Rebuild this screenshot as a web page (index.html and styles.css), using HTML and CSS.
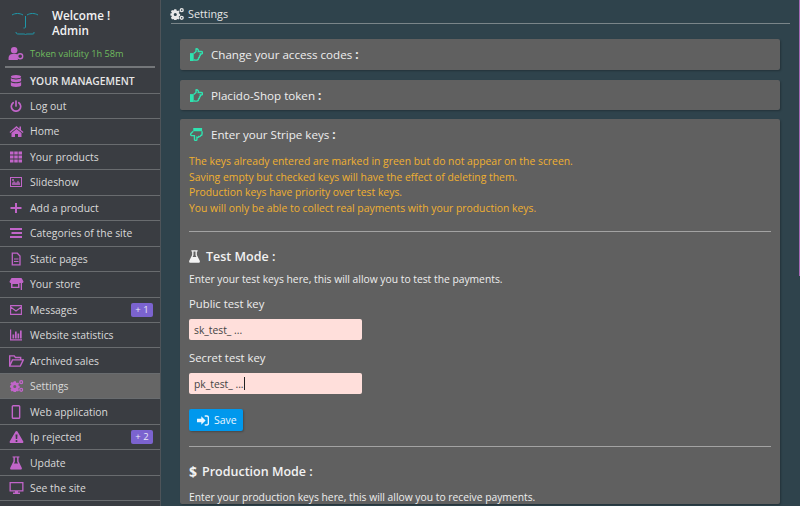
FILE: index.html
```html
<!DOCTYPE html>
<html lang="en">
<head>
<meta charset="utf-8">
<title>Settings</title>
<link rel="stylesheet" href="styles.css">
</head>
<body>
<svg class="sprites" width="0" height="0" aria-hidden="true">
  <symbol id="gears" viewBox="0 0 16 14"><path fill="currentColor" fill-rule="evenodd" d="M4.800 1.500h2.400l.3 1.400 1 .5 1.300-.6 1.300 1.700-1 1 .2 1 1.400.5v2.200l-1.400.4-.2 1.100 1 1-1.300 1.700-1.300-.6-1 .5-.3 1.400H4.800l-.3-1.400-1-.5-1.300.6L.9 11.200l1-1-.2-1.100L.3 8.700V6.500l1.400-.5.200-1-1-1 1.300-1.700 1.300.6 1-.5zM6 5.800a1.800 1.800 0 1 0 0 3.600 1.800 1.800 0 0 0 0-3.600z"/><path fill="currentColor" fill-rule="evenodd" d="M13.500 0a2.500 2.500 0 1 1 0 5 2.500 2.500 0 0 1 0-5zm0 1.600a.9.9 0 1 0 0 1.800.9.9 0 0 0 0-1.800zM13.500 9a2.500 2.500 0 1 1 0 5 2.500 2.500 0 0 1 0-5zm0 1.600a.9.9 0 1 0 0 1.800.9.9 0 0 0 0-1.800z"/></symbol>
  <symbol id="hand-right" viewBox="0 0 14 14"><path fill="currentColor" d="M0 5.500h4V14H0z"/><path fill="none" stroke="currentColor" stroke-width="1.500" d="M4 6 6.500 3.800V1c1.700-.6 2.900 1 2.400 2.800h3.400c1.500 0 1.500 2.700 0 2.700h-1.200c.3 1-.1 1.900-.8 2.100.1 1-.3 1.800-1 2 0 1-.7 2.400-2 2.400H5L4 12.500"/></symbol>
  <symbol id="hand-down" viewBox="0 0 14 14"><path fill="currentColor" d="M3.500 0H13v3.500H3.500z"/><path fill="none" stroke="currentColor" stroke-width="1.500" d="M3.500 3.500 1 6c-1 1.300.3 2.500 2 2.200h1.800v3.800c0 1.800 2.700 1.800 2.700 0V10c1 .3 1.800 0 2-.8 1 .2 2-.3 2.100-1.100 1 0 1.400-1 1.400-2V3.500"/></symbol>
  <symbol id="flask" viewBox="0 0 14 16"><path fill="currentColor" fill-rule="evenodd" d="M3 0h8v1.700h-1V6l3.700 7.500c.5 1.200-.2 2.500-1.500 2.500H1.800C.5 16-.2 14.700.3 13.500L4 6V1.700H3zM5.700 1.700v4.800L4.600 8.700h4.800L8.300 6.500V1.700z"/></symbol>
</svg>
<div class="app">
  <aside class="sidebar">
    <div class="welcome">
      <svg class="face" viewBox="0 0 30 30" width="30" height="30"><path fill="none" stroke="#1f97a8" stroke-width="1" d="M1 7c3-2 8-2 11 0M16 7c3-2 8-2 11 0M14.500 8v11c0 1-.5 1-2 1M5 24c0 2 1 2 3 2h4c1.500 0 2 0 2.500 1 .5-1 1-1 2.500-1h4c2 0 2 0 2-2"/></svg>
      <div class="welcome-text">Welcome !<br>Admin</div>
    </div>
    <div class="token">
      <svg class="token-icon" viewBox="0 0 16 14" width="16" height="13"><circle cx="6" cy="3.500" r="3.500" fill="currentColor"/><path fill="currentColor" d="M0 14v-2.500C0 9 2 7.500 4 7.500h4c1 0 1.500.3 2 .7v5.800z"/><circle cx="12.500" cy="10" r="2.700" fill="none" stroke="currentColor" stroke-width="1.500"/></svg>
      <span>Token validity 1h 58m</span>
    </div>
    <hr class="side-rule">
    <nav class="menu">
      <a class="item strong"><svg class="ic" viewBox="0 0 12 14"><path fill="currentColor" d="M6 0c3.300 0 6 .9 6 2s-2.700 2-6 2-6-.9-6-2 2.700-2 6-2zM0 3.600C1.200 4.800 3.500 5.200 6 5.200s4.800-.4 6-1.600v2.900c0 1.100-2.700 2-6 2s-6-.9-6-2zM0 8.100c1.200 1.200 3.500 1.600 6 1.600s4.800-.4 6-1.600V12c0 1.100-2.700 2-6 2s-6-.9-6-2z"/></svg><span>YOUR MANAGEMENT</span></a>
      <a class="item"><svg class="ic" viewBox="0 0 12 12"><path fill="none" stroke="currentColor" stroke-width="1.700" stroke-linecap="round" d="M6 1v5M3.200 2.700a4.700 4.700 0 1 0 5.600 0"/></svg><span>Log out</span></a>
      <a class="item"><svg class="ic wide" viewBox="0 0 14 12"><path fill="currentColor" d="M7 1 0 7l.8 1L7 3l6.200 5 .8-1-2.500-2.100V1.500H10v2.200zM7 4 2 8v4h3.500V9h3v3H12V8z"/></svg><span>Home</span></a>
      <a class="item"><svg class="ic" viewBox="0 0 12 11"><path fill="currentColor" d="M0 0h3.500v3H0zM4.250 0h3.500v3h-3.500zM8.500 0H12v3H8.500zM0 4h3.500v3H0zM4.250 4h3.500v3h-3.500zM8.500 4H12v3H8.500zM0 8h3.500v3H0zM4.250 8h3.500v3h-3.500zM8.500 8H12v3H8.500z"/></svg><span>Your products</span></a>
      <a class="item"><svg class="ic" viewBox="0 0 12 10"><path fill="currentColor" fill-rule="evenodd" d="M0 0h12v10H0zM1 1v8h10V1z"/><path fill="currentColor" opacity=".75" d="M2 8V6l2-2 2 2 2-2.500L10 6v2z"/><circle cx="3" cy="3" r="1" fill="currentColor"/></svg><span>Slideshow</span></a>
      <a class="item"><svg class="ic" viewBox="0 0 12 12"><path fill="currentColor" d="M5 1h2v4h4.500v2H7v4H5V7H.5V5H5z"/></svg><span>Add a product</span></a>
      <a class="item"><svg class="ic" viewBox="0 0 12 10"><path fill="currentColor" d="M0 0h12v2H0zM1.500 4H12v2H1.500zM0 8h12v2H0z"/></svg><span>Categories of the site</span></a>
      <a class="item"><svg class="ic tall" viewBox="0 0 12 13"><path fill="none" stroke="currentColor" stroke-width="1.300" d="M2.300.7h5l2.700 2.800v8.800H2.300z"/><path stroke="currentColor" d="M4 6.500h4.500M4 9h4.500"/></svg><span>Static pages</span></a>
      <a class="item"><svg class="ic wide" viewBox="0 0 14 12"><path fill="currentColor" fill-rule="evenodd" d="M2 0h10l2 3.500C14 4.500 13 5 12.500 5v7h-1.300V5H10v5H1.500V5C1 5 0 4.500 0 3.500zM3 6v2.800h5.500V6z"/></svg><span>Your store</span></a>
      <a class="item"><svg class="ic" viewBox="0 0 12 10"><path fill="none" stroke="currentColor" stroke-width="1.100" d="M.6.600h10.800v8.800H.6zM.6 2l5.400 4 5.400-4"/></svg><span>Messages</span><b class="badge">+ 1</b></a>
      <a class="item"><svg class="ic" viewBox="0 0 12 11"><path fill="currentColor" d="M0 0h1.200v9.800H12V11H0zM2.500 5h1.700v4H2.500zM5 2h1.700v7H5zM7.500 4h1.700v5H7.500zM10 1h1.700v8H10z"/></svg><span>Website statistics</span></a>
      <a class="item"><svg class="ic wide" viewBox="0 0 13 10"><path fill="none" stroke="currentColor" stroke-width="1.200" d="M.6 9.400V.6h4l1 1.400h4.500v1.500M.6 9.400h9.200l2.600-5.400H3z"/></svg><span>Archived sales</span></a>
      <a class="item active"><svg class="ic wide" viewBox="0 0 16 14"><use href="#gears"/></svg><span>Settings</span></a>
      <a class="item"><svg class="ic tall" viewBox="0 0 8 13"><path fill="none" stroke="currentColor" stroke-width="1.300" d="M1.400.7h5.200a.8.8 0 0 1 .8.800v10a.8.8 0 0 1-.8.800H1.400a.8.8 0 0 1-.8-.8v-10a.8.8 0 0 1 .8-.8z"/></svg><span>Web application</span></a>
      <a class="item"><svg class="ic wide" viewBox="0 0 14 12"><path fill="currentColor" fill-rule="evenodd" d="M7 0c.5 0 .8.300 1 .6l5.800 9.800c.4.800-.1 1.600-1 1.600H1.200c-.9 0-1.400-.8-1-1.600L6 .6C6.200.3 6.500 0 7 0zM6 3.500l.3 4.500h1.400L8 3.500zM7 9a1 1 0 1 0 0 2 1 1 0 0 0 0-2z"/></svg><span>Ip rejected</span><b class="badge">+ 2</b></a>
      <a class="item"><svg class="ic tall" viewBox="0 0 14 16"><use href="#flask"/></svg><span>Update</span></a>
      <a class="item"><svg class="ic wide" viewBox="0 0 14 12"><path fill="currentColor" fill-rule="evenodd" d="M0 0h14v9.500H8.500v1h2V12h-7v-1.500h2v-1H0zM1.300 1.300v6.900h11.400V1.300z"/></svg><span>See the site</span></a>
    </nav>
  </aside>
  <main class="main">
    <header class="crumb"><svg class="crumb-icon"><use href="#gears"/></svg><span>Settings</span></header>
    <section class="card closed"><h2 class="card-title"><svg class="hand"><use href="#hand-right"/></svg>Change your access codes <b class="colon">:</b></h2></section>
    <section class="card closed"><h2 class="card-title"><svg class="hand"><use href="#hand-right"/></svg>Placido-Shop token <b class="colon">:</b></h2></section>
    <section class="card">
      <h2 class="card-title"><svg class="hand"><use href="#hand-down"/></svg>Enter your Stripe keys <b class="colon">:</b></h2>
      <p class="notice">The keys already entered are marked in green but do not appear on the screen.<br>Saving empty but checked keys will have the effect of deleting them.<br>Production keys have priority over test keys.<br>You will only be able to collect real payments with your production keys.</p>
      <hr class="rule">
      <h3 class="mode"><svg class="mode-icon"><use href="#flask"/></svg>Test Mode :</h3>
      <p class="hint">Enter your test keys here, this will allow you to test the payments.</p>
      <label class="label">Public test key</label>
      <div class="field">sk_test_ ...</div>
      <label class="label">Secret test key</label>
      <div class="field">pk_test_ ...<i class="caret"></i></div>
      <button class="save"><svg viewBox="0 0 14 12" width="12" height="11"><path fill="currentColor" d="M0 4h5V1l5 5-5 5V8H0zM9 0h2.500C13 0 14 1 14 2.500v7c0 1.500-1 2.500-2.500 2.500H9v-1.500h2.500c.6 0 1-.4 1-1v-7c0-.6-.4-1-1-1H9z"/></svg>Save</button>
      <hr class="rule second">
      <h3 class="mode prod"><span class="dollar">$</span>Production Mode :</h3>
      <p class="hint">Enter your production keys here, this will allow you to receive payments.</p>
    </section>
  </main>
  <div class="scroll-edge"></div>
</div>
</body>
</html>
```
FILE: styles.css
```css
* { box-sizing: border-box; }
html, body { margin: 0; height: 100%; overflow: hidden; }
body { font-family: "Open Sans", sans-serif; font-size: 11px; color: #e8e8e8; background: #2f434c; }
.sprites { position: absolute; }
.app { display: flex; height: 506px; overflow: hidden; }

.sidebar { width: 161px; flex: none; background: #3a3d42; border-right: 1px solid #4e5459; }
.welcome { display: flex; align-items: center; gap: 11px; height: 45px; padding: 1px 0 0 11px; }
.face { flex: none; }
.welcome-text { font-size: 11.700px; line-height: 15px; font-weight: 600; color: #f2f2f2; }
.token { display: flex; align-items: center; height: 16px; margin-bottom: 5px; padding-left: 8px; font-size: 9.200px; color: #6fbb5e; }
.token-icon { color: #c165c9; margin-right: 6px; flex: none; }
.side-rule { margin: 0 5px; height: 2px; border: 0; background: #74777a; }
.menu { display: flex; flex-direction: column; padding-top: 0.300px; }
.item { display: flex; align-items: center; height: 25.470px; padding: 0 7px 0 0; border-bottom: 1px solid #696c6f; color: #d9d9d9; font-size: 10.400px; }
.item.strong { font-weight: 600; color: #e6e6e6; font-size: 10.300px; }
.item.active { background: #666; }
.ic { width: 12px; height: 12px; margin: 0 8px 0 10px; flex: none; color: #c165c9; }
.ic.wide { width: 15px; margin: 0 6px 0 9px; }
.ic.tall { height: 14px; }
.badge { margin-left: auto; width: 22px; height: 14px; border-radius: 2px; background: #7b63cf; color: #e8e8f5; font-size: 9.500px; font-weight: 400; line-height: 14px; text-align: center; }

.main { flex: 1; padding: 0 20px 0 10px; min-width: 0; overflow: hidden; }
.crumb { display: flex; align-items: center; gap: 4px; height: 24px; padding-top: 4px; margin-right: -10px; border-bottom: 1px solid #7a8589; font-size: 10.800px; color: #e8e8e8; }
.crumb-icon { width: 14px; height: 12px; color: #e8e8e8; margin-left: -1px; }
.card { margin: 15px 0 0 9px; border-radius: 2px; background: #606060; box-shadow: 1px 1px 2px rgba(0,0,0,.25); padding: 0 9px; }
.card.closed { height: 31px; }
.card.closed + .card.closed { height: 30px; margin-top: 10px; }
.card.closed + .card:not(.closed) { margin-top: 9px; }
.card-title { display: flex; align-items: center; margin: 0; height: 31px; font-size: 11.600px; font-weight: 400; color: #eee; white-space: pre; }
.colon { font-weight: 700; }
.hand { width: 13px; height: 13px; margin: 0 8px 0 1px; color: #2fe3b0; flex: none; }
.notice { margin: 4px 0 0; font-size: 10.380px; line-height: 15.500px; color: #f0b030; }
.rule { margin: 15px 0 0; border: 0; height: 1px; background: #a3a3a3; }
.mode { display: flex; align-items: center; margin: 16px 0 0; font-size: 12.500px; line-height: 17px; font-weight: 600; color: #f2f2f2; }
.mode-icon { width: 11px; height: 13px; margin-right: 6px; }
.dollar { font-size: 14px; margin-right: 5px; font-weight: 700; }
.hint { margin: 7px 0 0; font-size: 10.300px; line-height: 14px; color: #eee; }
.prod + .hint { margin-top: 10px; }
.label { display: block; margin-top: 10px; font-size: 11.300px; line-height: 15px; color: #eee; }
.field { display: flex; align-items: center; width: 173px; height: 21px; margin-top: 8px; padding-left: 5px; border-radius: 2px; background: #ffdfdb; color: #444; font-size: 10.300px; }
.caret { width: 1px; height: 13px; background: #222; }
.save { display: flex; align-items: center; gap: 5px; width: 54px; height: 22px; margin-top: 15px; padding: 0 0 0 8px; border: 0; border-radius: 2px; background: #0098ed; color: #eaf6ff; font: 10.500px "Open Sans", sans-serif; box-shadow: 1px 1px 2px rgba(0,0,0,.25); }
.second { margin-top: 15px; }
.scroll-edge { position: absolute; top: 0; right: 0; width: 1px; height: 276px; background: #a86ab8; }
```
